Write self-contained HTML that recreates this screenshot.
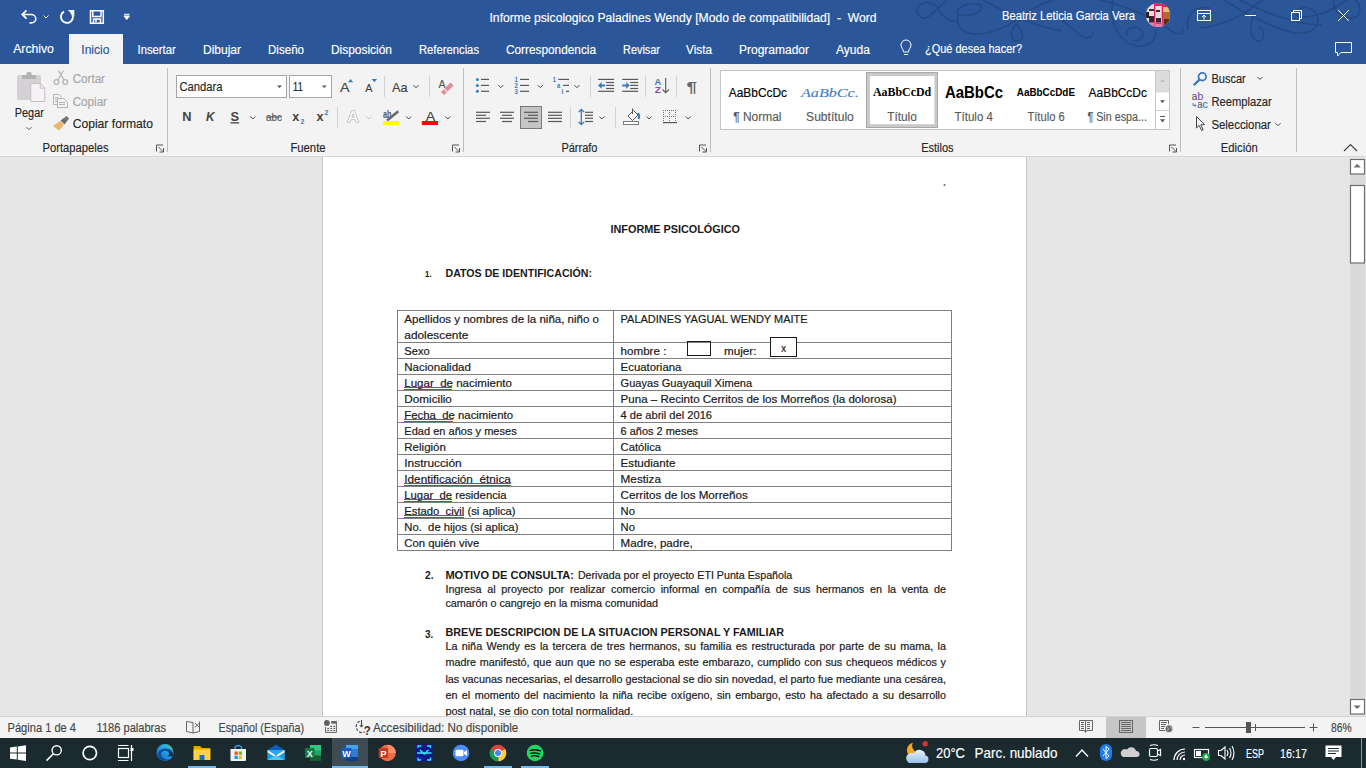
<!DOCTYPE html>
<html><head><meta charset="utf-8"><title>Word</title>
<style>html,body{margin:0;padding:0;width:1366px;height:768px;overflow:hidden;background:#e6e6e6}
svg text{font-family:"Liberation Sans", sans-serif;white-space:pre}
.dk{stroke:currentColor;stroke-width:0.35px}
</style></head><body>
<svg width="1366" height="768" viewBox="0 0 1366 768" style="position:absolute;left:0;top:0">
<rect x="0" y="0" width="1366" height="64" fill="#2b579a" />
<g fill="none" stroke="#244a85" stroke-width="1.6">
<path d="M947 0 C 940 6, 935 12, 928 17 C 920 21, 914 12, 919 6 C 924 0, 935 2, 939 10 C 943 17, 950 22, 958 22"/>
<path d="M958 14 C 955 25, 962 34, 975 34 C 995 34, 1010 25, 1025 14 C 1035 7, 1045 2, 1055 0"/>
<path d="M983 0 C 1000 10, 1030 25, 1062 31"/>
<path d="M1020 20 C 1010 28, 1009 41, 1017 41 C 1025 41, 1024 30, 1015 24"/>
<path d="M1050 10 C 1060 20, 1075 30, 1080 35 C 1085 40, 1095 38, 1093 31"/>
<path d="M1113 0 C 1110 15, 1113 35, 1130 44 C 1145 50, 1158 42, 1155 30"/>
<path d="M1127 35 C 1125 28, 1135 25, 1141 30 C 1146 35, 1140 42, 1133 40"/>
<path d="M1100 0 C 1120 5, 1150 15, 1170 30 C 1178 36, 1185 35, 1182 28"/>
<path d="M1188 30 C 1185 15, 1195 5, 1210 8"/>
<path d="M1224 0 C 1240 10, 1265 25, 1290 32 C 1305 36, 1318 30, 1318 20 C 1318 10, 1305 4, 1298 10 C 1292 16, 1300 20, 1320 14 C 1335 10, 1345 0, 1350 -2"/>
<path d="M1200 28 C 1225 25, 1245 15, 1262 0"/>
<path d="M1255 12 C 1248 25, 1250 40, 1258 41 C 1265 42, 1266 30, 1258 26"/>
<path d="M1334 0 C 1332 10, 1340 18, 1352 18 C 1362 17, 1362 5, 1355 0"/>
<path d="M1240 0 C 1270 15, 1300 25, 1322 25"/>
<ellipse cx="969.5" cy="9.5" rx="12.5" ry="5.5" transform="rotate(-12 969.5 9.5)"/>
</g>
<g fill="none" stroke="#fff" stroke-width="1.6" stroke-linecap="butt">
<path d="M23 14.5 H31 A4.8 4.2 0 0 1 31 22.9 H29.5"/>
</g>
<path d="M26.5 10.3 L22.3 14.5 L26.5 18.7" fill="none" stroke="#fff" stroke-width="1.8"/>
<path d="M43.5 15.5 L46 18 L48.5 15.5" fill="none" stroke="#fff" stroke-width="1"/>
<path d="M71.2 12.6 A6 6 0 1 1 64 11.6" fill="none" stroke="#fff" stroke-width="1.9"/>
<path d="M67.8 10 H74.3 V16.5 Z" fill="#fff"/>
<path d="M90.5 10.8 H103.3 V23.2 H90.5 Z M92.8 11 V16.5 H101 V11 M93.5 23 V19 H100.5 V23 M96 19.5 V22" fill="none" stroke="#fff" stroke-width="1.5"/>
<path d="M124 14.3 H129.5 M124 16 H129.5 L126.75 19.5 Z" fill="#fff" stroke="#fff" stroke-width="1"/>
<text x="489.5" y="22" font-size="12" fill="#fff" stroke="#fff" stroke-width="0.15" textLength="387" lengthAdjust="spacingAndGlyphs" >Informe psicologico Paladines Wendy [Modo de compatibilidad]  -  Word</text>
<text x="1002" y="20" font-size="12" fill="#fff" stroke="#fff" stroke-width="0.15" textLength="133" lengthAdjust="spacingAndGlyphs" >Beatriz Leticia Garcia Vera</text>
<defs><clipPath id="av"><circle cx="1158" cy="15" r="12.1"/></clipPath></defs>
<g clip-path="url(#av)">
<rect x="1145" y="2" width="26" height="26" fill="#eadcd6"/>
<rect x="1146" y="12" width="3" height="6" fill="#2a2222"/><rect x="1149" y="9" width="5" height="2" fill="#3a3030"/>
<rect x="1149" y="16" width="5" height="7" fill="#2e2a2e"/>
<rect x="1156" y="10" width="4" height="2" fill="#3a3030"/><rect x="1156" y="18" width="5" height="6" fill="#2e2a2e"/>
<rect x="1154" y="2" width="1.3" height="26" fill="#e0206a"/><rect x="1161.7" y="2" width="1.3" height="26" fill="#e0206a"/>
<rect x="1154" y="2" width="9" height="4" fill="#e0206a"/><rect x="1146" y="22" width="17" height="6" fill="#e85a9a" opacity="0.7"/>
<rect x="1163" y="2" width="9" height="26" fill="#b06a2a"/><rect x="1163" y="7" width="9" height="5" fill="#e5c07a"/><rect x="1163" y="3" width="5" height="4" fill="#e02030"/><rect x="1164" y="19" width="8" height="9" fill="#5a2a12"/>
</g>
<g fill="none" stroke="#fff" stroke-width="1">
<rect x="1197.5" y="10.5" width="13" height="10"/><path d="M1197.5 13.5 H1210.5 M1204 19.5 V15 M1202 17 L1204 15 L1206 17"/>
<path d="M1245 15.5 H1256"/>
<rect x="1291.5" y="12.5" width="8" height="8"/><path d="M1293.5 12.5 V10.5 H1301.5 V18.5 H1299.5"/>
<path d="M1338 10 L1349 21 M1349 10 L1338 21"/>
</g>
<rect x="69" y="34" width="54" height="30" fill="#f3f3f3" />
<text x="13.2" y="53" font-size="12" fill="#fff" stroke="#fff" stroke-width="0.15" textLength="40.7" lengthAdjust="spacingAndGlyphs" >Archivo</text>
<text x="81.3" y="54" font-size="12" fill="#2b579a" stroke="#2b579a" stroke-width="0.15" textLength="28.2" lengthAdjust="spacingAndGlyphs" >Inicio</text>
<text x="137.6" y="54" font-size="12" fill="#fff" stroke="#fff" stroke-width="0.15" textLength="38.1" lengthAdjust="spacingAndGlyphs" >Insertar</text>
<text x="203" y="54" font-size="12" fill="#fff" stroke="#fff" stroke-width="0.15" textLength="38" lengthAdjust="spacingAndGlyphs" >Dibujar</text>
<text x="268" y="54" font-size="12" fill="#fff" stroke="#fff" stroke-width="0.15" textLength="36" lengthAdjust="spacingAndGlyphs" >Diseño</text>
<text x="331" y="54" font-size="12" fill="#fff" stroke="#fff" stroke-width="0.15" textLength="61" lengthAdjust="spacingAndGlyphs" >Disposición</text>
<text x="419" y="54" font-size="12" fill="#fff" stroke="#fff" stroke-width="0.15" textLength="60" lengthAdjust="spacingAndGlyphs" >Referencias</text>
<text x="506" y="54" font-size="12" fill="#fff" stroke="#fff" stroke-width="0.15" textLength="90" lengthAdjust="spacingAndGlyphs" >Correspondencia</text>
<text x="623" y="54" font-size="12" fill="#fff" stroke="#fff" stroke-width="0.15" textLength="37" lengthAdjust="spacingAndGlyphs" >Revisar</text>
<text x="686" y="54" font-size="12" fill="#fff" stroke="#fff" stroke-width="0.15" textLength="26" lengthAdjust="spacingAndGlyphs" >Vista</text>
<text x="739" y="54" font-size="12" fill="#fff" stroke="#fff" stroke-width="0.15" textLength="70" lengthAdjust="spacingAndGlyphs" >Programador</text>
<text x="836" y="54" font-size="12" fill="#fff" stroke="#fff" stroke-width="0.15" textLength="34" lengthAdjust="spacingAndGlyphs" >Ayuda</text>
<text x="925" y="53" font-size="12" fill="#fff" stroke="#fff" stroke-width="0.15" textLength="97" lengthAdjust="spacingAndGlyphs" >¿Qué desea hacer?</text>
<path d="M903.5 52 C 903.5 49, 901 48, 901 45 A5 5 0 0 1 911 45 C 911 48, 908.5 49, 908.5 52 Z M904 54.5 H908" fill="none" stroke="#fff" stroke-width="1"/>
<path d="M1335.5 42.5 H1351.5 V52.5 H1341 L1337.5 56 V52.5 H1335.5 Z" fill="none" stroke="#fff" stroke-width="1"/>
<rect x="0" y="64" width="1366" height="92" fill="#f3f3f3" />
<rect x="0" y="156" width="1366" height="1" fill="#d6d6d6" />
<rect x="167" y="68" width="1" height="84" fill="#bdbdbd" />
<rect x="463" y="68" width="1" height="84" fill="#bdbdbd" />
<rect x="710" y="68" width="1" height="84" fill="#bdbdbd" />
<rect x="1180" y="68" width="1" height="84" fill="#bdbdbd" />
<rect x="1296" y="68" width="1" height="84" fill="#bdbdbd" />
<rect x="384" y="76" width="1" height="21" fill="#d2d2d2" />
<rect x="429" y="76" width="1" height="21" fill="#d2d2d2" />
<rect x="590" y="76" width="1" height="21" fill="#d2d2d2" />
<rect x="645" y="76" width="1" height="21" fill="#d2d2d2" />
<rect x="676" y="76" width="1" height="21" fill="#d2d2d2" />
<rect x="337" y="107" width="1" height="21" fill="#d2d2d2" />
<rect x="570" y="107" width="1" height="21" fill="#d2d2d2" />
<rect x="615" y="107" width="1" height="21" fill="#d2d2d2" />
<text x="42.5" y="152" font-size="12" fill="#262626" stroke="#262626" stroke-width="0.15" textLength="66" lengthAdjust="spacingAndGlyphs" >Portapapeles</text>
<text x="290.4" y="152" font-size="12" fill="#262626" stroke="#262626" stroke-width="0.15" textLength="35.2" lengthAdjust="spacingAndGlyphs" >Fuente</text>
<text x="561.4" y="152" font-size="12" fill="#262626" stroke="#262626" stroke-width="0.15" textLength="36" lengthAdjust="spacingAndGlyphs" >Párrafo</text>
<text x="921.2" y="152" font-size="12" fill="#262626" stroke="#262626" stroke-width="0.15" textLength="32.4" lengthAdjust="spacingAndGlyphs" >Estilos</text>
<text x="1220.7" y="152" font-size="12" fill="#262626" stroke="#262626" stroke-width="0.15" textLength="37" lengthAdjust="spacingAndGlyphs" >Edición</text>
<path d="M156.5 151.5 V145.0 H163" fill="none" stroke="#555" stroke-width="1"/>
<path d="M158.5 147.0 L163 151.5 M159.5 152.0 H163.5 V148.0" fill="none" stroke="#555" stroke-width="1"/>
<path d="M452.5 151.5 V145.0 H459" fill="none" stroke="#555" stroke-width="1"/>
<path d="M454.5 147.0 L459 151.5 M455.5 152.0 H459.5 V148.0" fill="none" stroke="#555" stroke-width="1"/>
<path d="M699.5 151.5 V145.0 H706" fill="none" stroke="#555" stroke-width="1"/>
<path d="M701.5 147.0 L706 151.5 M702.5 152.0 H706.5 V148.0" fill="none" stroke="#555" stroke-width="1"/>
<path d="M1169.5 151.5 V145.0 H1176" fill="none" stroke="#555" stroke-width="1"/>
<path d="M1171.5 147.0 L1176 151.5 M1172.5 152.0 H1176.5 V148.0" fill="none" stroke="#555" stroke-width="1"/>
<path d="M1344 151 L1350.5 144.5 L1357 151" fill="none" stroke="#444" stroke-width="1.2"/>
<rect x="17" y="75" width="24" height="25" rx="1.5" fill="#d3d1d3"/>
<rect x="22" y="75" width="14" height="4" fill="#b5b3b5"/><rect x="26.5" y="72" width="5" height="4" rx="1.5" fill="#b5b3b5"/>
<path d="M30.8 83.5 H40.5 L44.8 88 V101.5 H30.8 Z" fill="#f6f2f6" stroke="#c3c1c3" stroke-width="1"/>
<path d="M40.3 83.5 V88.2 H44.8" fill="none" stroke="#c3c1c3" stroke-width="1"/>
<text x="14.8" y="117" font-size="12" fill="#262626" stroke="#262626" stroke-width="0.15" textLength="29" lengthAdjust="spacingAndGlyphs" >Pegar</text>
<path d="M26.5 127.2 L29.0 129.7 L31.5 127.2" fill="none" stroke="#555" stroke-width="1"/>
<g fill="none" stroke="#b5b5b5" stroke-width="1.3"><circle cx="56.5" cy="82" r="2.4"/><circle cx="65.3" cy="82" r="2.4"/><path d="M57.8 79.8 L63.5 70.5 M64 79.8 L58.3 70.5"/></g>
<text x="72.7" y="83" font-size="12" fill="#a6a6a6" stroke="#a6a6a6" stroke-width="0.15" textLength="32.3" lengthAdjust="spacingAndGlyphs" >Cortar</text>
<g fill="#f3f3f3" stroke="#b5b5b5" stroke-width="1"><path d="M53.5 94.5 H59 L61 96.5 V104.5 H53.5 Z"/><path d="M57.5 98.5 H63.5 L67.5 102.5 V107.5 H57.5 Z"/><path d="M55 97.5 H58 M55 99.5 H58 M55 101.5 H57 M59 102.5 H65 M59 104.5 H65"/></g>
<text x="72.7" y="106" font-size="12" fill="#a6a6a6" stroke="#a6a6a6" stroke-width="0.15" textLength="34.3" lengthAdjust="spacingAndGlyphs" >Copiar</text>
<path d="M53 126 L60 121 L64 125 L59 130.5 Z" fill="#e8b86a"/>
<path d="M60.5 120.5 L64.5 117.5 L67.5 120.5 L64.5 124.5 Z" fill="#6d6d6d"/><path d="M64.5 117.5 L66.5 116 L69 118.5 L67.5 120.5 Z" fill="#6d6d6d"/>
<text x="72.7" y="128.2" font-size="12" fill="#262626" stroke="#262626" stroke-width="0.15" textLength="80.2" lengthAdjust="spacingAndGlyphs" >Copiar formato</text>
<rect x="176.5" y="75.5" width="110" height="22" fill="#fff" stroke="#a6a6a6" stroke-width="1"/>
<rect x="289.5" y="75.5" width="42" height="22" fill="#fff" stroke="#a6a6a6" stroke-width="1"/>
<text x="179.5" y="90.8" font-size="12" fill="#262626" stroke="#262626" stroke-width="0.15" textLength="43" lengthAdjust="spacingAndGlyphs" >Candara</text>
<text x="292.8" y="90.8" font-size="12" fill="#262626" stroke="#262626" stroke-width="0.15" textLength="10.2" lengthAdjust="spacingAndGlyphs" >11</text>
<path d="M277 85.5 H282 L279.5 88 Z M321.8 85.5 H326.8 L324.3 88 Z" fill="#555"/>
<text x="340" y="92" font-size="13.5" fill="#444" stroke="#444" stroke-width="0.15" textLength="9.5" lengthAdjust="spacingAndGlyphs" >A</text>
<path d="M348 82.2 L350.6 79 L353.2 82.2 Z" fill="#3d78b8"/>
<text x="365.2" y="92" font-size="10.5" fill="#444" stroke="#444" stroke-width="0.15" textLength="7.2" lengthAdjust="spacingAndGlyphs" >A</text>
<path d="M371.7 79 L377.1 79 L374.4 82.2 Z" fill="#3d78b8"/>
<text x="392" y="92" font-size="13.5" fill="#444" stroke="#444" stroke-width="0.15" textLength="15.5" lengthAdjust="spacingAndGlyphs" >Aa</text>
<path d="M413.5 85.2 L416.0 87.7 L418.5 85.2" fill="none" stroke="#444" stroke-width="1"/>
<text x="438.5" y="87.5" font-size="10" fill="#555" stroke="#555" stroke-width="0.15" textLength="7" lengthAdjust="spacingAndGlyphs" >A</text>
<path d="M444.5 88.5 L450.5 82.5 L453.5 85.5 L447.5 91.5 Z" fill="#e48a9a"/><path d="M441 92 L443.8 89.2 L446.8 92.2 L444 95 Z" fill="#e48a9a"/>
<text x="182.3" y="120.8" font-size="12.5" fill="#444" font-weight="bold" textLength="9.2" lengthAdjust="spacingAndGlyphs" >N</text>
<text x="206" y="120.8" font-size="12.5" fill="#444" font-weight="bold" font-style="italic" textLength="8.5" lengthAdjust="spacingAndGlyphs" >K</text>
<text x="230.5" y="120.8" font-size="12.5" fill="#444" font-weight="bold" textLength="8.6" lengthAdjust="spacingAndGlyphs" >S</text>
<rect x="230.5" y="122.2" width="8.6" height="1.3" fill="#444" />
<path d="M250.3 116.5 L252.8 119.0 L255.3 116.5" fill="none" stroke="#444" stroke-width="1"/>
<text x="266" y="120.8" font-size="11.5" fill="#555" stroke="#555" stroke-width="0.15" textLength="16" lengthAdjust="spacingAndGlyphs" >abc</text>
<rect x="266" y="116.5" width="16" height="1" fill="#555" />
<text x="292.2" y="120.8" font-size="12.5" fill="#444" font-weight="bold" textLength="7" lengthAdjust="spacingAndGlyphs" >x</text>
<text x="300.6" y="124" font-size="7" fill="#3d78b8" font-weight="bold" textLength="3.8" lengthAdjust="spacingAndGlyphs" >2</text>
<text x="316.5" y="120.8" font-size="12.5" fill="#444" font-weight="bold" textLength="7" lengthAdjust="spacingAndGlyphs" >x</text>
<text x="324.6" y="115" font-size="7" fill="#3d78b8" font-weight="bold" textLength="3.8" lengthAdjust="spacingAndGlyphs" >2</text>
<path d="M347.2 122.5 L351.6 110.6 H354.4 L358.8 122.5 H356 L355 119.6 H351 L350 122.5 Z M351.8 117.4 H354.2 L353 113.6 Z" fill="#fbfbfb" stroke="#c2c2c2" stroke-width="0.9" fill-rule="evenodd"/>
<path d="M366.4 116.5 L368.9 119.0 L371.4 116.5" fill="none" stroke="#c4c4c4" stroke-width="1"/>
<text x="383" y="117.5" font-size="10" fill="#555" font-weight="bold" textLength="8.5" lengthAdjust="spacingAndGlyphs" >ab</text>
<path d="M387 120.5 L398.3 111.3" stroke="#6a6a6a" stroke-width="2.6"/>
<rect x="383" y="121" width="16" height="4" fill="#ffff00" />
<path d="M406.2 116.5 L408.7 119.0 L411.2 116.5" fill="none" stroke="#444" stroke-width="1"/>
<text x="425.8" y="120.8" font-size="13" fill="#444" stroke="#444" stroke-width="0.15" textLength="9.5" lengthAdjust="spacingAndGlyphs" >A</text>
<rect x="421.8" y="121" width="16.2" height="4" fill="#ff0000" />
<path d="M445.3 116.5 L447.8 119.0 L450.3 116.5" fill="none" stroke="#444" stroke-width="1"/>
<circle cx="477.4" cy="79.4" r="1.5" fill="#3d78b8"/>
<rect x="481" y="78.80000000000001" width="8" height="1.2" fill="#595959" />
<circle cx="477.4" cy="85.4" r="1.5" fill="#3d78b8"/>
<rect x="481" y="84.80000000000001" width="8" height="1.2" fill="#595959" />
<circle cx="477.4" cy="91.3" r="1.5" fill="#3d78b8"/>
<rect x="481" y="90.7" width="8" height="1.2" fill="#595959" />
<path d="M498.3 85.2 L500.8 87.7 L503.3 85.2" fill="none" stroke="#444" stroke-width="1"/>
<text x="514.6" y="82.0" font-size="7" fill="#3d78b8" font-weight="bold" textLength="3.4" lengthAdjust="spacingAndGlyphs" >1</text>
<rect x="520" y="78.80000000000001" width="9" height="1.2" fill="#595959" />
<text x="514.6" y="88.0" font-size="7" fill="#3d78b8" font-weight="bold" textLength="3.4" lengthAdjust="spacingAndGlyphs" >2</text>
<rect x="520" y="84.80000000000001" width="9" height="1.2" fill="#595959" />
<text x="514.6" y="93.89999999999999" font-size="7" fill="#3d78b8" font-weight="bold" textLength="3.4" lengthAdjust="spacingAndGlyphs" >3</text>
<rect x="520" y="90.7" width="9" height="1.2" fill="#595959" />
<path d="M537.8 85.2 L540.3 87.7 L542.8 85.2" fill="none" stroke="#444" stroke-width="1"/>
<text x="552.8" y="82" font-size="7" fill="#3d78b8" font-weight="bold" textLength="3.2" lengthAdjust="spacingAndGlyphs" >1</text>
<rect x="558.3" y="78.8" width="10.7" height="1.2" fill="#595959" />
<text x="557" y="88" font-size="7" fill="#3d78b8" font-weight="bold" textLength="3.2" lengthAdjust="spacingAndGlyphs" >a</text>
<rect x="563" y="84.8" width="6" height="1.2" fill="#595959" />
<text x="561.6" y="94" font-size="7" fill="#3d78b8" font-weight="bold" textLength="1.8" lengthAdjust="spacingAndGlyphs" >i</text>
<rect x="566" y="90.7" width="3" height="1.2" fill="#595959" />
<path d="M574.5 85.2 L577.0 87.7 L579.5 85.2" fill="none" stroke="#444" stroke-width="1"/>
<rect x="598.1" y="78.8" width="16" height="1.2" fill="#595959" />
<rect x="598.1" y="90.7" width="16" height="1.2" fill="#595959" />
<rect x="606.1" y="81.9" width="8" height="1.2" fill="#595959" />
<rect x="606.1" y="84.8" width="8" height="1.2" fill="#595959" />
<rect x="606.1" y="87.9" width="8" height="1.2" fill="#595959" />
<path d="M598.1 85.4 L601.6 82 V84.4 H605.1 V86.4 H601.6 V88.8 Z" fill="#3d78b8"/>
<rect x="622.2" y="78.8" width="16" height="1.2" fill="#595959" />
<rect x="622.2" y="90.7" width="16" height="1.2" fill="#595959" />
<rect x="630.2" y="81.9" width="8" height="1.2" fill="#595959" />
<rect x="630.2" y="84.8" width="8" height="1.2" fill="#595959" />
<rect x="630.2" y="87.9" width="8" height="1.2" fill="#595959" />
<path d="M629.7 85.4 L626.2 82 V84.4 H622.2 V86.4 H626.2 V88.8 Z" fill="#3d78b8"/>
<text x="654.6" y="84.6" font-size="9" fill="#3d78b8" font-weight="bold" textLength="6.6" lengthAdjust="spacingAndGlyphs" >A</text>
<text x="654.8" y="93.2" font-size="9" fill="#8a4bb4" font-weight="bold" textLength="6.2" lengthAdjust="spacingAndGlyphs" >Z</text>
<path d="M665.7 78 V92.5 M662.5 89.5 L665.7 92.8 L668.9 89.5" fill="none" stroke="#555" stroke-width="1.1"/>
<text x="686.5" y="92" font-size="14" fill="#666" font-weight="bold" textLength="10.5" lengthAdjust="spacingAndGlyphs" >¶</text>
<rect x="476" y="111.7" width="14" height="1.2" fill="#595959" />
<rect x="476" y="114.7" width="10" height="1.2" fill="#595959" />
<rect x="476" y="117.7" width="14" height="1.2" fill="#595959" />
<rect x="476" y="120.9" width="10" height="1.2" fill="#595959" />
<rect x="500" y="111.7" width="14" height="1.2" fill="#595959" />
<rect x="502" y="114.7" width="10" height="1.2" fill="#595959" />
<rect x="500" y="117.7" width="14" height="1.2" fill="#595959" />
<rect x="502" y="120.9" width="10" height="1.2" fill="#595959" />
<rect x="520.5" y="106.5" width="21" height="22" fill="#c5c5c5" stroke="#7a7a7a" stroke-width="1"/>
<rect x="524" y="111.7" width="14" height="1.2" fill="#595959" />
<rect x="528" y="114.7" width="10" height="1.2" fill="#595959" />
<rect x="524" y="117.7" width="14" height="1.2" fill="#595959" />
<rect x="528" y="120.9" width="10" height="1.2" fill="#595959" />
<rect x="548" y="111.7" width="14" height="1.2" fill="#595959" />
<rect x="548" y="114.7" width="14" height="1.2" fill="#595959" />
<rect x="548" y="117.7" width="14" height="1.2" fill="#595959" />
<rect x="548" y="120.9" width="14" height="1.2" fill="#595959" />
<path d="M581.3 109.5 V124.5 M578.6 112 L581.3 109.3 L584 112 M578.6 122 L581.3 124.7 L584 122" fill="none" stroke="#3d78b8" stroke-width="1.3"/>
<rect x="585" y="111.7" width="8" height="1.2" fill="#595959" />
<rect x="585" y="114.7" width="8" height="1.2" fill="#595959" />
<rect x="585" y="117.7" width="8" height="1.2" fill="#595959" />
<rect x="585" y="120.9" width="8" height="1.2" fill="#595959" />
<path d="M599.3 116.5 L601.8 119.0 L604.3 116.5" fill="none" stroke="#444" stroke-width="1"/>
<path d="M628 116 L633.5 110.5 L638 115 L632.5 120.5 Z" fill="#fff" stroke="#555" stroke-width="1"/><path d="M632.5 108.5 V114" stroke="#555" stroke-width="1"/>
<path d="M638 113 Q640 116 638.5 119" fill="none" stroke="#3d78b8" stroke-width="2"/>
<rect x="623.5" y="121.5" width="15" height="3" fill="#fff" stroke="#7a7a7a" stroke-width="1"/>
<path d="M646.6 116.5 L649.1 119.0 L651.6 116.5" fill="none" stroke="#444" stroke-width="1"/>
<g fill="#777">
<rect x="663" y="110" width="1" height="1"/>
<rect x="663" y="112" width="1" height="1"/>
<rect x="663" y="114" width="1" height="1"/>
<rect x="663" y="116" width="1" height="1"/>
<rect x="663" y="118" width="1" height="1"/>
<rect x="663" y="120" width="1" height="1"/>
<rect x="663" y="122" width="1" height="1"/>
<rect x="665" y="110" width="1" height="1"/>
<rect x="665" y="116" width="1" height="1"/>
<rect x="665" y="122" width="1" height="1"/>
<rect x="667" y="110" width="1" height="1"/>
<rect x="667" y="116" width="1" height="1"/>
<rect x="667" y="122" width="1" height="1"/>
<rect x="669" y="110" width="1" height="1"/>
<rect x="669" y="112" width="1" height="1"/>
<rect x="669" y="114" width="1" height="1"/>
<rect x="669" y="116" width="1" height="1"/>
<rect x="669" y="118" width="1" height="1"/>
<rect x="669" y="120" width="1" height="1"/>
<rect x="669" y="122" width="1" height="1"/>
<rect x="671" y="110" width="1" height="1"/>
<rect x="671" y="116" width="1" height="1"/>
<rect x="671" y="122" width="1" height="1"/>
<rect x="673" y="110" width="1" height="1"/>
<rect x="673" y="116" width="1" height="1"/>
<rect x="673" y="122" width="1" height="1"/>
<rect x="675" y="110" width="1" height="1"/>
<rect x="675" y="112" width="1" height="1"/>
<rect x="675" y="114" width="1" height="1"/>
<rect x="675" y="116" width="1" height="1"/>
<rect x="675" y="118" width="1" height="1"/>
<rect x="675" y="120" width="1" height="1"/>
<rect x="675" y="122" width="1" height="1"/>
</g>
<rect x="663" y="122" width="14" height="1.2" fill="#555" />
<path d="M685.7 116.5 L688.2 119.0 L690.7 116.5" fill="none" stroke="#444" stroke-width="1"/>
<rect x="720.5" y="70.5" width="449" height="59" fill="#fff" stroke="#c6c6c6" stroke-width="1"/>
<text x="728.8" y="97" font-size="12" fill="#000" stroke="#000" stroke-width="0.15" textLength="58.2" lengthAdjust="spacingAndGlyphs" >AaBbCcDc</text>
<text x="733.2" y="120.5" font-size="12" fill="#595959" stroke="#595959" stroke-width="0.15" textLength="48.3" lengthAdjust="spacingAndGlyphs" >¶ Normal</text>
<text x="801" y="97" font-size="13" fill="#4a7fc1" stroke="#4a7fc1" stroke-width="0.15" style='font-family:"Liberation Serif", serif' font-style="italic" textLength="57.8" lengthAdjust="spacingAndGlyphs" >AaBbCc.</text>
<text x="806.1" y="120.5" font-size="12" fill="#595959" stroke="#595959" stroke-width="0.15" textLength="47.7" lengthAdjust="spacingAndGlyphs" >Subtítulo</text>
<rect x="866.5" y="72.5" width="71" height="55" fill="#c9c9c9" stroke="#a8a8a8" stroke-width="1"/>
<rect x="870" y="76" width="64.4" height="48.2" fill="#fff" />
<text x="872.9" y="95.9" font-size="12" fill="#000" style='font-family:"Liberation Serif", serif' font-weight="bold" textLength="58.3" lengthAdjust="spacingAndGlyphs" >AaBbCcDd</text>
<text x="887.2" y="120.5" font-size="12" fill="#595959" stroke="#595959" stroke-width="0.15" textLength="29.6" lengthAdjust="spacingAndGlyphs" >Título</text>
<text x="944.9" y="97.6" font-size="16.5" fill="#000" font-weight="bold" textLength="58.2" lengthAdjust="spacingAndGlyphs" >AaBbCc</text>
<text x="954.6" y="120.5" font-size="12" fill="#595959" stroke="#595959" stroke-width="0.15" textLength="38.3" lengthAdjust="spacingAndGlyphs" >Título 4</text>
<text x="1016.8" y="95.9" font-size="10.5" fill="#000" font-weight="bold" textLength="58.2" lengthAdjust="spacingAndGlyphs" >AaBbCcDdE</text>
<text x="1027.4" y="120.5" font-size="12" fill="#595959" stroke="#595959" stroke-width="0.15" textLength="37.3" lengthAdjust="spacingAndGlyphs" >Título 6</text>
<text x="1088.6" y="96.5" font-size="12" fill="#000" stroke="#000" stroke-width="0.15" textLength="58.3" lengthAdjust="spacingAndGlyphs" >AaBbCcDc</text>
<text x="1087.4" y="120.5" font-size="12" fill="#595959" stroke="#595959" stroke-width="0.15" textLength="59.6" lengthAdjust="spacingAndGlyphs" >¶ Sin espa...</text>
<rect x="1155.5" y="70.5" width="14" height="59" fill="#fff" stroke="#c6c6c6" stroke-width="1"/>
<rect x="1156" y="71" width="13" height="20.5" fill="#dcdcdc" />
<rect x="1155.5" y="91.5" width="14" height="0.8" fill="#c6c6c6" />
<rect x="1155.5" y="110" width="14" height="0.8" fill="#c6c6c6" />
<path d="M1160 82 L1162.5 79 L1165 82 Z" fill="#bdbdbd"/>
<path d="M1160 100.2 H1165 L1162.5 103 Z" fill="#555"/>
<rect x="1160" y="116" width="5" height="1" fill="#555" />
<path d="M1160 119.2 H1165 L1162.5 122.5 Z" fill="#555"/>
<circle cx="1202.3" cy="76.7" r="3.8" fill="none" stroke="#3d78b8" stroke-width="1.8"/><path d="M1199.5 79.6 L1194.3 84.6" stroke="#3d78b8" stroke-width="2.2" stroke-linecap="round"/>
<text x="1211.4" y="82.8" font-size="12" fill="#262626" stroke="#262626" stroke-width="0.15" textLength="34.4" lengthAdjust="spacingAndGlyphs" >Buscar</text>
<path d="M1257.4 77 L1259.9 79.5 L1262.4 77" fill="none" stroke="#444" stroke-width="1"/>
<text x="1191.8" y="100.2" font-size="10" fill="#595959" stroke="#595959" stroke-width="0.15" textLength="5.5" lengthAdjust="spacingAndGlyphs" >a</text>
<text x="1197.5" y="100.2" font-size="10" fill="#8a4bb4" stroke="#8a4bb4" stroke-width="0.15" textLength="5.8" lengthAdjust="spacingAndGlyphs" >b</text>
<text x="1197.2" y="107.7" font-size="10" fill="#595959" stroke="#595959" stroke-width="0.15" textLength="5.3" lengthAdjust="spacingAndGlyphs" >a</text>
<text x="1202.5" y="107.7" font-size="10" fill="#3d78b8" stroke="#3d78b8" stroke-width="0.15" textLength="5.3" lengthAdjust="spacingAndGlyphs" >c</text>
<path d="M1193 103 V105.5 H1196 M1194.7 104.2 L1196 105.5 L1194.7 106.8" fill="none" stroke="#3d78b8" stroke-width="0.9"/>
<text x="1211.4" y="105.6" font-size="12" fill="#262626" stroke="#262626" stroke-width="0.15" textLength="60.4" lengthAdjust="spacingAndGlyphs" >Reemplazar</text>
<path d="M1196.5 116.5 V128 L1199.2 125.5 L1201.6 130.5 L1203.2 129.8 L1200.8 124.8 L1204.5 124.6 Z" fill="#f3f3f3" stroke="#444" stroke-width="1"/>
<text x="1211.4" y="128.7" font-size="12" fill="#262626" stroke="#262626" stroke-width="0.15" textLength="59.5" lengthAdjust="spacingAndGlyphs" >Seleccionar</text>
<path d="M1275.5 123.2 L1278.0 125.7 L1280.5 123.2" fill="none" stroke="#444" stroke-width="1"/>
<rect x="0" y="157" width="1349" height="559" fill="#e6e6e6" />
<rect x="322" y="157" width="705" height="559" fill="#c6c6c6" />
<rect x="323" y="157" width="703" height="559" fill="#ffffff" />
<rect x="1349" y="157" width="17" height="559" fill="#e6e6e6" />
<rect x="1350" y="174" width="15" height="525" fill="#dadada" />
<rect x="1350.5" y="159.5" width="14" height="14.5" fill="#fff" stroke="#6f6f6f" stroke-width="1.2"/>
<path d="M1353.6 167.4 H1360.8 L1357.2 163.8 Z" fill="#6f6f6f"/>
<rect x="1350.5" y="185.5" width="14" height="77.5" fill="#fff" stroke="#6f6f6f" stroke-width="1.2"/>
<rect x="1350.5" y="699.5" width="14" height="14.5" fill="#fff" stroke="#6f6f6f" stroke-width="1.2"/>
<path d="M1353.6 705.4 H1360.8 L1357.2 709 Z" fill="#6f6f6f"/>
<circle cx="944.5" cy="185" r="1" fill="#666"/>
<text x="610.5" y="233.2" font-size="11.5" fill="#1a1a1a" font-weight="bold" textLength="129.5" lengthAdjust="spacingAndGlyphs" >INFORME PSICOLÓGICO</text>
<text x="425" y="277" font-size="9.5" fill="#1a1a1a" font-weight="bold" textLength="6.6" lengthAdjust="spacingAndGlyphs" >1.</text>
<text x="445.5" y="277.1" font-size="11.5" fill="#1a1a1a" font-weight="bold" textLength="146.5" lengthAdjust="spacingAndGlyphs" >DATOS DE IDENTIFICACIÓN:</text>
<rect x="397" y="310" width="555" height="1" fill="#7f7f7f" />
<rect x="397" y="342" width="555" height="1" fill="#7f7f7f" />
<rect x="397" y="358" width="555" height="1" fill="#7f7f7f" />
<rect x="397" y="374" width="555" height="1" fill="#7f7f7f" />
<rect x="397" y="390" width="555" height="1" fill="#7f7f7f" />
<rect x="397" y="406" width="555" height="1" fill="#7f7f7f" />
<rect x="397" y="422" width="555" height="1" fill="#7f7f7f" />
<rect x="397" y="438" width="555" height="1" fill="#7f7f7f" />
<rect x="397" y="454" width="555" height="1" fill="#7f7f7f" />
<rect x="397" y="470" width="555" height="1" fill="#7f7f7f" />
<rect x="397" y="486" width="555" height="1" fill="#7f7f7f" />
<rect x="397" y="502" width="555" height="1" fill="#7f7f7f" />
<rect x="397" y="518" width="555" height="1" fill="#7f7f7f" />
<rect x="397" y="534" width="555" height="1" fill="#7f7f7f" />
<rect x="397" y="550" width="555" height="1" fill="#7f7f7f" />
<rect x="397" y="310" width="1" height="241" fill="#7f7f7f" />
<rect x="613" y="310" width="1" height="241" fill="#7f7f7f" />
<rect x="951" y="310" width="1" height="241" fill="#7f7f7f" />
<text x="404.3" y="322.8" font-size="11.5" fill="#1a1a1a" stroke="#1a1a1a" stroke-width="0.2" textLength="194.7" lengthAdjust="spacingAndGlyphs" >Apellidos y nombres de la niña, niño o</text>
<text x="404.3" y="354.8" font-size="11.5" fill="#1a1a1a" stroke="#1a1a1a" stroke-width="0.2" textLength="25.5" lengthAdjust="spacingAndGlyphs" >Sexo</text>
<text x="404.3" y="370.8" font-size="11.5" fill="#1a1a1a" stroke="#1a1a1a" stroke-width="0.2" textLength="66.6" lengthAdjust="spacingAndGlyphs" >Nacionalidad</text>
<text x="404.3" y="386.8" font-size="11.5" fill="#1a1a1a" stroke="#1a1a1a" stroke-width="0.2" textLength="107.6" lengthAdjust="spacingAndGlyphs" >Lugar  de nacimiento</text>
<text x="404.3" y="402.8" font-size="11.5" fill="#1a1a1a" stroke="#1a1a1a" stroke-width="0.2" textLength="47.6" lengthAdjust="spacingAndGlyphs" >Domicilio</text>
<text x="404.3" y="418.8" font-size="11.5" fill="#1a1a1a" stroke="#1a1a1a" stroke-width="0.2" textLength="108.7" lengthAdjust="spacingAndGlyphs" >Fecha  de nacimiento</text>
<text x="404.3" y="434.8" font-size="11.5" fill="#1a1a1a" stroke="#1a1a1a" stroke-width="0.2" textLength="112.4" lengthAdjust="spacingAndGlyphs" >Edad en años y meses</text>
<text x="404.3" y="450.8" font-size="11.5" fill="#1a1a1a" stroke="#1a1a1a" stroke-width="0.2" textLength="41.6" lengthAdjust="spacingAndGlyphs" >Religión</text>
<text x="404.3" y="466.8" font-size="11.5" fill="#1a1a1a" stroke="#1a1a1a" stroke-width="0.2" textLength="57.4" lengthAdjust="spacingAndGlyphs" >Instrucción</text>
<text x="404.3" y="482.8" font-size="11.5" fill="#1a1a1a" stroke="#1a1a1a" stroke-width="0.2" textLength="106.5" lengthAdjust="spacingAndGlyphs" >Identificación  étnica</text>
<text x="404.3" y="498.8" font-size="11.5" fill="#1a1a1a" stroke="#1a1a1a" stroke-width="0.2" textLength="102.3" lengthAdjust="spacingAndGlyphs" >Lugar  de residencia</text>
<text x="404.3" y="514.8" font-size="11.5" fill="#1a1a1a" stroke="#1a1a1a" stroke-width="0.2" textLength="111.3" lengthAdjust="spacingAndGlyphs" >Estado  civil (si aplica)</text>
<text x="404.3" y="530.8" font-size="11.5" fill="#1a1a1a" stroke="#1a1a1a" stroke-width="0.2" textLength="114.1" lengthAdjust="spacingAndGlyphs" >No.  de hijos (si aplica)</text>
<text x="404.3" y="546.8" font-size="11.5" fill="#1a1a1a" stroke="#1a1a1a" stroke-width="0.2" textLength="74.9" lengthAdjust="spacingAndGlyphs" >Con quién vive</text>
<text x="620.6" y="322.8" font-size="11.5" fill="#1a1a1a" stroke="#1a1a1a" stroke-width="0.2" textLength="186.9" lengthAdjust="spacingAndGlyphs" >PALADINES YAGUAL WENDY MAITE</text>
<text x="620.6" y="354.8" font-size="11.5" fill="#1a1a1a" stroke="#1a1a1a" stroke-width="0.2" textLength="45.8" lengthAdjust="spacingAndGlyphs" >hombre :</text>
<text x="620.6" y="370.8" font-size="11.5" fill="#1a1a1a" stroke="#1a1a1a" stroke-width="0.2" textLength="60.8" lengthAdjust="spacingAndGlyphs" >Ecuatoriana</text>
<text x="620.6" y="386.8" font-size="11.5" fill="#1a1a1a" stroke="#1a1a1a" stroke-width="0.2" textLength="131.5" lengthAdjust="spacingAndGlyphs" >Guayas Guayaquil Ximena</text>
<text x="620.6" y="402.8" font-size="11.5" fill="#1a1a1a" stroke="#1a1a1a" stroke-width="0.2" textLength="276.0" lengthAdjust="spacingAndGlyphs" >Puna – Recinto Cerritos de los Morreños (la dolorosa)</text>
<text x="620.6" y="418.8" font-size="11.5" fill="#1a1a1a" stroke="#1a1a1a" stroke-width="0.2" textLength="91.4" lengthAdjust="spacingAndGlyphs" >4 de abril del 2016</text>
<text x="620.6" y="434.8" font-size="11.5" fill="#1a1a1a" stroke="#1a1a1a" stroke-width="0.2" textLength="77.4" lengthAdjust="spacingAndGlyphs" >6 años 2 meses</text>
<text x="620.6" y="450.8" font-size="11.5" fill="#1a1a1a" stroke="#1a1a1a" stroke-width="0.2" textLength="40.4" lengthAdjust="spacingAndGlyphs" >Católica</text>
<text x="620.6" y="466.8" font-size="11.5" fill="#1a1a1a" stroke="#1a1a1a" stroke-width="0.2" textLength="54.9" lengthAdjust="spacingAndGlyphs" >Estudiante</text>
<text x="620.6" y="482.8" font-size="11.5" fill="#1a1a1a" stroke="#1a1a1a" stroke-width="0.2" textLength="40.4" lengthAdjust="spacingAndGlyphs" >Mestiza</text>
<text x="620.6" y="498.8" font-size="11.5" fill="#1a1a1a" stroke="#1a1a1a" stroke-width="0.2" textLength="127.1" lengthAdjust="spacingAndGlyphs" >Cerritos de los Morreños</text>
<text x="620.6" y="514.8" font-size="11.5" fill="#1a1a1a" stroke="#1a1a1a" stroke-width="0.2" textLength="14.3" lengthAdjust="spacingAndGlyphs" >No</text>
<text x="620.6" y="530.8" font-size="11.5" fill="#1a1a1a" stroke="#1a1a1a" stroke-width="0.2" textLength="14.3" lengthAdjust="spacingAndGlyphs" >No</text>
<text x="620.6" y="546.8" font-size="11.5" fill="#1a1a1a" stroke="#1a1a1a" stroke-width="0.2" textLength="72.2" lengthAdjust="spacingAndGlyphs" >Madre, padre,</text>
<text x="404.3" y="338.8" font-size="11.5" fill="#1a1a1a" stroke="#1a1a1a" stroke-width="0.2" textLength="64" lengthAdjust="spacingAndGlyphs" >adolescente</text>
<text x="723.9" y="354.8" font-size="11.5" fill="#1a1a1a" stroke="#1a1a1a" stroke-width="0.2" textLength="32.5" lengthAdjust="spacingAndGlyphs" >mujer:</text>
<rect x="687.5" y="341.5" width="23" height="14" fill="none" stroke="#1a1a1a" stroke-width="1"/>
<rect x="770.5" y="337.5" width="26" height="19" fill="#fff" stroke="#1a1a1a" stroke-width="1"/>
<text x="781.2" y="352" font-size="10.5" fill="#1a1a1a" stroke="#1a1a1a" stroke-width="0.2" textLength="4.8" lengthAdjust="spacingAndGlyphs" >x</text>
<rect x="404" y="387" width="47.89999999999998" height="1" fill="#2266dd" />
<rect x="404" y="389" width="47.89999999999998" height="1" fill="#2266dd" />
<rect x="404" y="419" width="48.80000000000001" height="1" fill="#2266dd" />
<rect x="404" y="421" width="48.80000000000001" height="1" fill="#2266dd" />
<rect x="404" y="483" width="106.80000000000001" height="1" fill="#2266dd" />
<rect x="404" y="485" width="106.80000000000001" height="1" fill="#2266dd" />
<rect x="404" y="499" width="48" height="1" fill="#2266dd" />
<rect x="404" y="501" width="48" height="1" fill="#2266dd" />
<rect x="404" y="515" width="60" height="1" fill="#2266dd" />
<rect x="404" y="517" width="60" height="1" fill="#2266dd" />
<text x="425" y="579" font-size="10.5" fill="#1a1a1a" font-weight="bold" textLength="8.5" lengthAdjust="spacingAndGlyphs" >2.</text>
<text x="445.4" y="578.9" font-size="11.5" fill="#1a1a1a" font-weight="bold" textLength="128.6" lengthAdjust="spacingAndGlyphs" >MOTIVO DE CONSULTA:</text>
<text x="577.9" y="578.9" font-size="11.5" fill="#1a1a1a" stroke="#1a1a1a" stroke-width="0.2" textLength="214.4" lengthAdjust="spacingAndGlyphs" >Derivada por el proyecto ETI Punta Española</text>
<text x="445.4" y="592.8" font-size="11.5" fill="#1a1a1a" stroke="#1a1a1a" stroke-width="0.2" textLength="36.05" lengthAdjust="spacingAndGlyphs" >Ingresa</text>
<text x="487.19" y="592.8" font-size="11.5" fill="#1a1a1a" stroke="#1a1a1a" stroke-width="0.2" textLength="8.41" lengthAdjust="spacingAndGlyphs" >al</text>
<text x="501.33" y="592.8" font-size="11.5" fill="#1a1a1a" stroke="#1a1a1a" stroke-width="0.2" textLength="41.46" lengthAdjust="spacingAndGlyphs" >proyecto</text>
<text x="548.53" y="592.8" font-size="11.5" fill="#1a1a1a" stroke="#1a1a1a" stroke-width="0.2" textLength="15.62" lengthAdjust="spacingAndGlyphs" >por</text>
<text x="569.88" y="592.8" font-size="11.5" fill="#1a1a1a" stroke="#1a1a1a" stroke-width="0.2" textLength="35.44" lengthAdjust="spacingAndGlyphs" >realizar</text>
<text x="611.06" y="592.8" font-size="11.5" fill="#1a1a1a" stroke="#1a1a1a" stroke-width="0.2" textLength="43.85" lengthAdjust="spacingAndGlyphs" >comercio</text>
<text x="660.64" y="592.8" font-size="11.5" fill="#1a1a1a" stroke="#1a1a1a" stroke-width="0.2" textLength="38.44" lengthAdjust="spacingAndGlyphs" >informal</text>
<text x="704.82" y="592.8" font-size="11.5" fill="#1a1a1a" stroke="#1a1a1a" stroke-width="0.2" textLength="12.02" lengthAdjust="spacingAndGlyphs" >en</text>
<text x="722.58" y="592.8" font-size="11.5" fill="#1a1a1a" stroke="#1a1a1a" stroke-width="0.2" textLength="47.47" lengthAdjust="spacingAndGlyphs" >compañía</text>
<text x="775.78" y="592.8" font-size="11.5" fill="#1a1a1a" stroke="#1a1a1a" stroke-width="0.2" textLength="12.02" lengthAdjust="spacingAndGlyphs" >de</text>
<text x="793.54" y="592.8" font-size="11.5" fill="#1a1a1a" stroke="#1a1a1a" stroke-width="0.2" textLength="16.82" lengthAdjust="spacingAndGlyphs" >sus</text>
<text x="816.1" y="592.8" font-size="11.5" fill="#1a1a1a" stroke="#1a1a1a" stroke-width="0.2" textLength="48.07" lengthAdjust="spacingAndGlyphs" >hermanos</text>
<text x="869.9" y="592.8" font-size="11.5" fill="#1a1a1a" stroke="#1a1a1a" stroke-width="0.2" textLength="12.02" lengthAdjust="spacingAndGlyphs" >en</text>
<text x="887.65" y="592.8" font-size="11.5" fill="#1a1a1a" stroke="#1a1a1a" stroke-width="0.2" textLength="8.41" lengthAdjust="spacingAndGlyphs" >la</text>
<text x="901.8" y="592.8" font-size="11.5" fill="#1a1a1a" stroke="#1a1a1a" stroke-width="0.2" textLength="26.44" lengthAdjust="spacingAndGlyphs" >venta</text>
<text x="933.98" y="592.8" font-size="11.5" fill="#1a1a1a" stroke="#1a1a1a" stroke-width="0.2" textLength="12.02" lengthAdjust="spacingAndGlyphs" >de</text>
<text x="445.4" y="606.7" font-size="11.5" fill="#1a1a1a" stroke="#1a1a1a" stroke-width="0.2" textLength="212.6" lengthAdjust="spacingAndGlyphs" >camarón o cangrejo en la misma comunidad</text>
<text x="425" y="637.5" font-size="10.5" fill="#1a1a1a" font-weight="bold" textLength="8.2" lengthAdjust="spacingAndGlyphs" >3.</text>
<text x="445.4" y="635.9" font-size="11.5" fill="#1a1a1a" font-weight="bold" textLength="338.6" lengthAdjust="spacingAndGlyphs" >BREVE DESCRIPCION DE LA SITUACION PERSONAL Y FAMILIAR</text>
<text x="445.4" y="650" font-size="11.5" fill="#1a1a1a" stroke="#1a1a1a" stroke-width="0.2" textLength="12.02" lengthAdjust="spacingAndGlyphs" >La</text>
<text x="461.71" y="650" font-size="11.5" fill="#1a1a1a" stroke="#1a1a1a" stroke-width="0.2" textLength="20.44" lengthAdjust="spacingAndGlyphs" >niña</text>
<text x="486.44" y="650" font-size="11.5" fill="#1a1a1a" stroke="#1a1a1a" stroke-width="0.2" textLength="33.45" lengthAdjust="spacingAndGlyphs" >Wendy</text>
<text x="524.17" y="650" font-size="11.5" fill="#1a1a1a" stroke="#1a1a1a" stroke-width="0.2" textLength="11.42" lengthAdjust="spacingAndGlyphs" >es</text>
<text x="539.88" y="650" font-size="11.5" fill="#1a1a1a" stroke="#1a1a1a" stroke-width="0.2" textLength="8.41" lengthAdjust="spacingAndGlyphs" >la</text>
<text x="552.58" y="650" font-size="11.5" fill="#1a1a1a" stroke="#1a1a1a" stroke-width="0.2" textLength="33.64" lengthAdjust="spacingAndGlyphs" >tercera</text>
<text x="590.51" y="650" font-size="11.5" fill="#1a1a1a" stroke="#1a1a1a" stroke-width="0.2" textLength="12.02" lengthAdjust="spacingAndGlyphs" >de</text>
<text x="606.83" y="650" font-size="11.5" fill="#1a1a1a" stroke="#1a1a1a" stroke-width="0.2" textLength="18.02" lengthAdjust="spacingAndGlyphs" >tres</text>
<text x="629.14" y="650" font-size="11.5" fill="#1a1a1a" stroke="#1a1a1a" stroke-width="0.2" textLength="51.07" lengthAdjust="spacingAndGlyphs" >hermanos,</text>
<text x="684.49" y="650" font-size="11.5" fill="#1a1a1a" stroke="#1a1a1a" stroke-width="0.2" textLength="11.42" lengthAdjust="spacingAndGlyphs" >su</text>
<text x="700.2" y="650" font-size="11.5" fill="#1a1a1a" stroke="#1a1a1a" stroke-width="0.2" textLength="31.24" lengthAdjust="spacingAndGlyphs" >familia</text>
<text x="735.73" y="650" font-size="11.5" fill="#1a1a1a" stroke="#1a1a1a" stroke-width="0.2" textLength="11.42" lengthAdjust="spacingAndGlyphs" >es</text>
<text x="751.43" y="650" font-size="11.5" fill="#1a1a1a" stroke="#1a1a1a" stroke-width="0.2" textLength="63.68" lengthAdjust="spacingAndGlyphs" >restructurada</text>
<text x="819.41" y="650" font-size="11.5" fill="#1a1a1a" stroke="#1a1a1a" stroke-width="0.2" textLength="15.62" lengthAdjust="spacingAndGlyphs" >por</text>
<text x="839.32" y="650" font-size="11.5" fill="#1a1a1a" stroke="#1a1a1a" stroke-width="0.2" textLength="24.64" lengthAdjust="spacingAndGlyphs" >parte</text>
<text x="868.24" y="650" font-size="11.5" fill="#1a1a1a" stroke="#1a1a1a" stroke-width="0.2" textLength="12.02" lengthAdjust="spacingAndGlyphs" >de</text>
<text x="884.56" y="650" font-size="11.5" fill="#1a1a1a" stroke="#1a1a1a" stroke-width="0.2" textLength="11.42" lengthAdjust="spacingAndGlyphs" >su</text>
<text x="900.26" y="650" font-size="11.5" fill="#1a1a1a" stroke="#1a1a1a" stroke-width="0.2" textLength="33.03" lengthAdjust="spacingAndGlyphs" >mama,</text>
<text x="937.59" y="650" font-size="11.5" fill="#1a1a1a" stroke="#1a1a1a" stroke-width="0.2" textLength="8.41" lengthAdjust="spacingAndGlyphs" >la</text>
<text x="445.4" y="666" font-size="11.5" fill="#1a1a1a" stroke="#1a1a1a" stroke-width="0.2" textLength="30.64" lengthAdjust="spacingAndGlyphs" >madre</text>
<text x="479.77" y="666" font-size="11.5" fill="#1a1a1a" stroke="#1a1a1a" stroke-width="0.2" textLength="49.87" lengthAdjust="spacingAndGlyphs" >manifestó,</text>
<text x="533.36" y="666" font-size="11.5" fill="#1a1a1a" stroke="#1a1a1a" stroke-width="0.2" textLength="18.03" lengthAdjust="spacingAndGlyphs" >que</text>
<text x="555.13" y="666" font-size="11.5" fill="#1a1a1a" stroke="#1a1a1a" stroke-width="0.2" textLength="18.03" lengthAdjust="spacingAndGlyphs" >aun</text>
<text x="576.89" y="666" font-size="11.5" fill="#1a1a1a" stroke="#1a1a1a" stroke-width="0.2" textLength="18.03" lengthAdjust="spacingAndGlyphs" >que</text>
<text x="598.65" y="666" font-size="11.5" fill="#1a1a1a" stroke="#1a1a1a" stroke-width="0.2" textLength="12.02" lengthAdjust="spacingAndGlyphs" >no</text>
<text x="614.41" y="666" font-size="11.5" fill="#1a1a1a" stroke="#1a1a1a" stroke-width="0.2" textLength="11.42" lengthAdjust="spacingAndGlyphs" >se</text>
<text x="629.55" y="666" font-size="11.5" fill="#1a1a1a" stroke="#1a1a1a" stroke-width="0.2" textLength="45.07" lengthAdjust="spacingAndGlyphs" >esperaba</text>
<text x="678.35" y="666" font-size="11.5" fill="#1a1a1a" stroke="#1a1a1a" stroke-width="0.2" textLength="20.43" lengthAdjust="spacingAndGlyphs" >este</text>
<text x="702.51" y="666" font-size="11.5" fill="#1a1a1a" stroke="#1a1a1a" stroke-width="0.2" textLength="51.07" lengthAdjust="spacingAndGlyphs" >embarazo,</text>
<text x="757.31" y="666" font-size="11.5" fill="#1a1a1a" stroke="#1a1a1a" stroke-width="0.2" textLength="43.26" lengthAdjust="spacingAndGlyphs" >cumplido</text>
<text x="804.3" y="666" font-size="11.5" fill="#1a1a1a" stroke="#1a1a1a" stroke-width="0.2" textLength="17.43" lengthAdjust="spacingAndGlyphs" >con</text>
<text x="825.46" y="666" font-size="11.5" fill="#1a1a1a" stroke="#1a1a1a" stroke-width="0.2" textLength="16.82" lengthAdjust="spacingAndGlyphs" >sus</text>
<text x="846.01" y="666" font-size="11.5" fill="#1a1a1a" stroke="#1a1a1a" stroke-width="0.2" textLength="46.88" lengthAdjust="spacingAndGlyphs" >chequeos</text>
<text x="896.62" y="666" font-size="11.5" fill="#1a1a1a" stroke="#1a1a1a" stroke-width="0.2" textLength="40.25" lengthAdjust="spacingAndGlyphs" >médicos</text>
<text x="940.59" y="666" font-size="11.5" fill="#1a1a1a" stroke="#1a1a1a" stroke-width="0.2" textLength="5.4" lengthAdjust="spacingAndGlyphs" >y</text>
<text x="445.4" y="683" font-size="11.5" fill="#1a1a1a" stroke="#1a1a1a" stroke-width="0.2" textLength="13.82" lengthAdjust="spacingAndGlyphs" >las</text>
<text x="462.19" y="683" font-size="11.5" fill="#1a1a1a" stroke="#1a1a1a" stroke-width="0.2" textLength="40.26" lengthAdjust="spacingAndGlyphs" >vacunas</text>
<text x="505.41" y="683" font-size="11.5" fill="#1a1a1a" stroke="#1a1a1a" stroke-width="0.2" textLength="55.28" lengthAdjust="spacingAndGlyphs" >necesarias,</text>
<text x="563.66" y="683" font-size="11.5" fill="#1a1a1a" stroke="#1a1a1a" stroke-width="0.2" textLength="8.41" lengthAdjust="spacingAndGlyphs" >el</text>
<text x="575.04" y="683" font-size="11.5" fill="#1a1a1a" stroke="#1a1a1a" stroke-width="0.2" textLength="47.46" lengthAdjust="spacingAndGlyphs" >desarrollo</text>
<text x="625.47" y="683" font-size="11.5" fill="#1a1a1a" stroke="#1a1a1a" stroke-width="0.2" textLength="54.69" lengthAdjust="spacingAndGlyphs" >gestacional</text>
<text x="683.12" y="683" font-size="11.5" fill="#1a1a1a" stroke="#1a1a1a" stroke-width="0.2" textLength="11.42" lengthAdjust="spacingAndGlyphs" >se</text>
<text x="697.51" y="683" font-size="11.5" fill="#1a1a1a" stroke="#1a1a1a" stroke-width="0.2" textLength="14.42" lengthAdjust="spacingAndGlyphs" >dio</text>
<text x="714.9" y="683" font-size="11.5" fill="#1a1a1a" stroke="#1a1a1a" stroke-width="0.2" textLength="13.82" lengthAdjust="spacingAndGlyphs" >sin</text>
<text x="731.68" y="683" font-size="11.5" fill="#1a1a1a" stroke="#1a1a1a" stroke-width="0.2" textLength="44.48" lengthAdjust="spacingAndGlyphs" >novedad,</text>
<text x="779.13" y="683" font-size="11.5" fill="#1a1a1a" stroke="#1a1a1a" stroke-width="0.2" textLength="8.41" lengthAdjust="spacingAndGlyphs" >el</text>
<text x="790.51" y="683" font-size="11.5" fill="#1a1a1a" stroke="#1a1a1a" stroke-width="0.2" textLength="24.64" lengthAdjust="spacingAndGlyphs" >parto</text>
<text x="818.11" y="683" font-size="11.5" fill="#1a1a1a" stroke="#1a1a1a" stroke-width="0.2" textLength="15.03" lengthAdjust="spacingAndGlyphs" >fue</text>
<text x="836.11" y="683" font-size="11.5" fill="#1a1a1a" stroke="#1a1a1a" stroke-width="0.2" textLength="44.47" lengthAdjust="spacingAndGlyphs" >mediante</text>
<text x="883.54" y="683" font-size="11.5" fill="#1a1a1a" stroke="#1a1a1a" stroke-width="0.2" textLength="18.03" lengthAdjust="spacingAndGlyphs" >una</text>
<text x="904.54" y="683" font-size="11.5" fill="#1a1a1a" stroke="#1a1a1a" stroke-width="0.2" textLength="41.46" lengthAdjust="spacingAndGlyphs" >cesárea,</text>
<text x="445.4" y="699" font-size="11.5" fill="#1a1a1a" stroke="#1a1a1a" stroke-width="0.2" textLength="12.02" lengthAdjust="spacingAndGlyphs" >en</text>
<text x="461.82" y="699" font-size="11.5" fill="#1a1a1a" stroke="#1a1a1a" stroke-width="0.2" textLength="8.41" lengthAdjust="spacingAndGlyphs" >el</text>
<text x="474.63" y="699" font-size="11.5" fill="#1a1a1a" stroke="#1a1a1a" stroke-width="0.2" textLength="45.06" lengthAdjust="spacingAndGlyphs" >momento</text>
<text x="524.09" y="699" font-size="11.5" fill="#1a1a1a" stroke="#1a1a1a" stroke-width="0.2" textLength="14.42" lengthAdjust="spacingAndGlyphs" >del</text>
<text x="542.91" y="699" font-size="11.5" fill="#1a1a1a" stroke="#1a1a1a" stroke-width="0.2" textLength="52.27" lengthAdjust="spacingAndGlyphs" >nacimiento</text>
<text x="599.58" y="699" font-size="11.5" fill="#1a1a1a" stroke="#1a1a1a" stroke-width="0.2" textLength="8.41" lengthAdjust="spacingAndGlyphs" >la</text>
<text x="612.39" y="699" font-size="11.5" fill="#1a1a1a" stroke="#1a1a1a" stroke-width="0.2" textLength="20.44" lengthAdjust="spacingAndGlyphs" >niña</text>
<text x="637.22" y="699" font-size="11.5" fill="#1a1a1a" stroke="#1a1a1a" stroke-width="0.2" textLength="29.44" lengthAdjust="spacingAndGlyphs" >recibe</text>
<text x="671.06" y="699" font-size="11.5" fill="#1a1a1a" stroke="#1a1a1a" stroke-width="0.2" textLength="41.47" lengthAdjust="spacingAndGlyphs" >oxígeno,</text>
<text x="716.92" y="699" font-size="11.5" fill="#1a1a1a" stroke="#1a1a1a" stroke-width="0.2" textLength="13.82" lengthAdjust="spacingAndGlyphs" >sin</text>
<text x="735.14" y="699" font-size="11.5" fill="#1a1a1a" stroke="#1a1a1a" stroke-width="0.2" textLength="45.66" lengthAdjust="spacingAndGlyphs" >embargo,</text>
<text x="785.2" y="699" font-size="11.5" fill="#1a1a1a" stroke="#1a1a1a" stroke-width="0.2" textLength="20.43" lengthAdjust="spacingAndGlyphs" >esto</text>
<text x="810.03" y="699" font-size="11.5" fill="#1a1a1a" stroke="#1a1a1a" stroke-width="0.2" textLength="12.02" lengthAdjust="spacingAndGlyphs" >ha</text>
<text x="826.45" y="699" font-size="11.5" fill="#1a1a1a" stroke="#1a1a1a" stroke-width="0.2" textLength="41.47" lengthAdjust="spacingAndGlyphs" >afectado</text>
<text x="872.31" y="699" font-size="11.5" fill="#1a1a1a" stroke="#1a1a1a" stroke-width="0.2" textLength="6.01" lengthAdjust="spacingAndGlyphs" >a</text>
<text x="882.72" y="699" font-size="11.5" fill="#1a1a1a" stroke="#1a1a1a" stroke-width="0.2" textLength="11.42" lengthAdjust="spacingAndGlyphs" >su</text>
<text x="898.54" y="699" font-size="11.5" fill="#1a1a1a" stroke="#1a1a1a" stroke-width="0.2" textLength="47.46" lengthAdjust="spacingAndGlyphs" >desarrollo</text>
<text x="445.4" y="715" font-size="11.5" fill="#1a1a1a" stroke="#1a1a1a" stroke-width="0.2" textLength="187.8" lengthAdjust="spacingAndGlyphs" >post natal, se dio con total normalidad.</text>
<rect x="0" y="716" width="1366" height="1" fill="#d4d4d4" />
<rect x="0" y="717" width="1366" height="21" fill="#f3f3f3" />
<text x="7.5" y="732" font-size="12" fill="#444" stroke="#444" stroke-width="0.15" textLength="68.5" lengthAdjust="spacingAndGlyphs" >Página 1 de 4</text>
<text x="96.6" y="732" font-size="12" fill="#444" stroke="#444" stroke-width="0.15" textLength="69.4" lengthAdjust="spacingAndGlyphs" >1186 palabras</text>
<path d="M186.5 721.5 V731.5 L193 733 L199.5 731.5 V721.5 M193 722.5 V733 M186.5 721.5 L193 722.5" fill="none" stroke="#666" stroke-width="1"/>
<path d="M195 723 L199.5 727.5 M199.5 723 L195 727.5" stroke="#666" stroke-width="1"/>
<text x="218.5" y="732" font-size="12" fill="#444" stroke="#444" stroke-width="0.15" textLength="85.5" lengthAdjust="spacingAndGlyphs" >Español (España)</text>
<circle cx="326.9" cy="723" r="2.9" fill="#606060"/><rect x="331.2" y="721.1" width="5.7" height="2.5" fill="#606060"/>
<path d="M336.4 723 V732.4 H325.6 V727.1" fill="none" stroke="#606060" stroke-width="1"/>
<g fill="#606060"><rect x="330.3" y="725.9" width="1.8" height="1.1"/><rect x="333.3" y="725.9" width="1.8" height="1.1"/><rect x="327.3" y="727.9" width="1.8" height="1.1"/><rect x="330.3" y="727.9" width="1.8" height="1.1"/><rect x="333.3" y="727.9" width="1.8" height="1.1"/><rect x="327.3" y="729.9" width="1.8" height="1.1"/><rect x="330.3" y="729.9" width="1.8" height="1.1"/><rect x="333.3" y="729.9" width="1.8" height="1.1"/></g>
<path d="M359.6 721.2 A6 6 0 1 0 365 732" fill="none" stroke="#444" stroke-width="1.2" stroke-dasharray="2.6 1.6"/>
<path d="M361.5 720 V725.5" stroke="#444" stroke-width="1.1"/><path d="M359.3 725.2 H363.7 L361.5 727.6 Z" fill="#444"/>
<text x="363.8" y="734.7" font-size="13.5" fill="#333" font-weight="bold" textLength="7" lengthAdjust="spacingAndGlyphs" >?</text>
<text x="373" y="732" font-size="12" fill="#444" stroke="#444" stroke-width="0.15" textLength="145.3" lengthAdjust="spacingAndGlyphs" >Accesibilidad: No disponible</text>
<rect x="1106" y="717" width="40" height="21" fill="#c6c6c6" />
<g fill="none" stroke="#666" stroke-width="1">
<path d="M1085.5 721 V732 M1079.5 730.5 V720.5 H1092.5 V730.5 H1086.5 L1085.5 732.5 L1084.5 730.5 Z"/>
<path d="M1081 722.5 H1084 M1081 724.5 H1084 M1081 726.5 H1084 M1081 728.5 H1084 M1087 722.5 H1090 M1087 724.5 H1090 M1087 726.5 H1090 M1087 728.5 H1090"/>
<rect x="1119.5" y="720.5" width="13" height="12"/><path d="M1121 722.5 H1131 M1121 724.5 H1131 M1121 726.5 H1131 M1121 728.5 H1131 M1121 730.5 H1131"/>
<path d="M1168.5 724 V720.5 H1159.5 V730.5 H1165"/><path d="M1161 722.5 H1167 M1161 724.5 H1166 M1161 726.5 H1165 M1161 728.5 H1164"/>
</g>
<circle cx="1169" cy="728.7" r="3.9" fill="#666" stroke="#f3f3f3" stroke-width="0.8"/><path d="M1167 726.5 Q1169 728 1168 730.5 M1170 726 Q1171.5 727.5 1171.5 729" fill="none" stroke="#ddd" stroke-width="0.7"/>
<rect x="1192.5" y="727" width="7" height="1" fill="#555" />
<rect x="1205" y="727" width="100" height="1" fill="#555" />
<rect x="1255" y="724" width="1" height="7" fill="#555" />
<rect x="1246" y="722" width="5" height="11" fill="#555" />
<rect x="1309.5" y="727" width="8" height="1" fill="#555" />
<rect x="1313" y="723.5" width="1" height="8" fill="#555" />
<text x="1331" y="732" font-size="12" fill="#444" stroke="#444" stroke-width="0.15" textLength="20.7" lengthAdjust="spacingAndGlyphs" >86%</text>
<rect x="0" y="738" width="1366" height="30" fill="#1a2a2f" />
<path d="M10 747.5 L16.8 746.6 V752.6 H10 Z M17.8 746.4 L26 745.2 V752.6 H17.8 Z M10 753.6 H16.8 V759.6 L10 758.7 Z M17.8 753.6 H26 V761 L17.8 759.8 Z" fill="#fff"/>
<circle cx="56.7" cy="750.3" r="4.6" fill="none" stroke="#fff" stroke-width="1.4"/><path d="M53.5 753.6 L46.5 760.6" stroke="#fff" stroke-width="1.5"/>
<circle cx="89.8" cy="753" r="6.7" fill="none" stroke="#fff" stroke-width="1.7"/>
<g fill="none" stroke="#fff" stroke-width="1.2"><rect x="118.5" y="748.5" width="10" height="9"/><path d="M118 745.5 H128.5 M118 760.5 H128.5 M131.5 745 V761"/></g><rect x="130.5" y="748" width="3" height="3" fill="#fff"/>
<defs><linearGradient id="edg" x1="1" y1="0" x2="0" y2="1"><stop offset="0" stop-color="#5fd35a"/><stop offset="0.35" stop-color="#29a9e8"/><stop offset="1" stop-color="#1264c2"/></linearGradient></defs>
<circle cx="165" cy="752.5" r="8.5" fill="url(#edg)"/>
<path d="M157.5 755 C 158.5 760, 165 762, 170 759.5 C 166 760, 161 758, 161 754.5 C 161 751, 165 750, 167.5 751.5 C 170 753, 169.5 755.5, 167 756.5 L173.5 756.5 C 174 752, 171 748.5, 166 748.5 C 161 748.5, 157.5 751, 157.5 755 Z" fill="#0b4fa0"/>
<path d="M167.5 755.8 C 170 755, 170 752.5, 167.5 751.5 C 171 751, 173 753, 173.5 756.5 Z" fill="#1a2a2f" opacity="0.9"/>
<path d="M193.6 746 H200 L202 748 H210.3 V760 H193.6 Z" fill="#e8a400"/><rect x="193.6" y="749.5" width="16.7" height="10.5" fill="#ffd24a"/><rect x="199.5" y="755" width="5" height="5" fill="#1a73c8"/>
<rect x="188" y="766" width="28" height="2" fill="#76b9ed" />
<path d="M230.5 749 H246 V760 Q246 761 245 761 H231.5 Q230.5 761 230.5 760 Z" fill="#f3f3f3"/><path d="M235 749 V747 Q238 744 241.5 747 V749" fill="none" stroke="#3aa0e8" stroke-width="1.3"/>
<rect x="234.5" y="751.5" width="3.3" height="3.3" fill="#f25022"/><rect x="238.7" y="751.5" width="3.3" height="3.3" fill="#7fba00"/><rect x="234.5" y="755.7" width="3.3" height="3.3" fill="#00a4ef"/><rect x="238.7" y="755.7" width="3.3" height="3.3" fill="#ffb900"/>
<path d="M267.6 750 L276 744.5 L284.5 750 Z" fill="#0f5cb8"/>
<rect x="267.6" y="750" width="16.9" height="10" fill="#28a8ea"/>
<path d="M267.6 750 L276 755.5 L284.5 750 V752.5 L276 758 L267.6 752.5 Z" fill="#f2f2f2"/>
<path d="M267.6 752.5 L276 758 L284.5 752.5 V760 H267.6 Z" fill="#1b9de2"/><path d="M267.6 760 L276 755 L284.5 760 Z" fill="#50c8f5"/>
<rect x="310" y="745" width="11" height="16" rx="1" fill="#21a366"/><rect x="310" y="745" width="11" height="5.5" fill="#33c481"/><rect x="310" y="755.5" width="11" height="5.5" fill="#185c37"/><rect x="305" y="748" width="9.5" height="10" rx="1" fill="#107c41"/>
<text x="306.8" y="756.5" font-size="8.5" fill="#fff" font-weight="bold" textLength="6" lengthAdjust="spacingAndGlyphs" >X</text>
<rect x="332" y="738" width="36" height="30" fill="#3e4d53" />
<rect x="332" y="766" width="36" height="2" fill="#76b9ed" />
<rect x="346" y="745" width="12" height="16" rx="1" fill="#2b7cd3"/><rect x="346" y="745" width="12" height="4" fill="#41a5ee"/><rect x="346" y="757" width="12" height="4" fill="#103f91"/><rect x="341.5" y="748" width="10" height="10" rx="1" fill="#185abd"/>
<text x="342.3" y="756.5" font-size="8.5" fill="#fff" font-weight="bold" textLength="8.5" lengthAdjust="spacingAndGlyphs" >W</text>
<circle cx="387.5" cy="753" r="8.3" fill="#ed6c47"/><path d="M387.5 744.7 A8.3 8.3 0 0 1 395.8 753 H387.5 Z" fill="#ff8f6b"/><rect x="378.7" y="748" width="9.5" height="10" rx="1" fill="#c43e1c"/>
<text x="380.6" y="756.5" font-size="8.5" fill="#fff" font-weight="bold" textLength="6" lengthAdjust="spacingAndGlyphs" >P</text>
<rect x="416" y="744.5" width="16.5" height="17" fill="#0a1a8c"/><path d="M418 748 V746 H421 M427 746 H430.5 V748 M418 757.5 V760 H421 M427 760 H430.5 V757.5 M417 753 H431.5 M420 750 L424.2 754 L428.5 750" fill="none" stroke="#3be8f5" stroke-width="1.3"/>
<circle cx="461" cy="753" r="8.3" fill="#4a8cff"/><rect x="455.5" y="749.8" width="8" height="6.5" rx="1.3" fill="#fff"/><path d="M464 752 L467 750 V756 L464 754 Z" fill="#fff"/>
<circle cx="498" cy="753" r="8.3" fill="#db4437"/><path d="M498 753 L505.2 748.9 A8.3 8.3 0 0 1 498.4 761.3 Z" fill="#ffcd40"/><path d="M498 753 L498.4 761.3 A8.3 8.3 0 0 1 490.8 748.9 Z" fill="#0f9d58"/><circle cx="498" cy="753" r="3.9" fill="#fff"/><circle cx="498" cy="753" r="3" fill="#4285f4"/>
<rect x="484" y="766" width="28" height="2" fill="#76b9ed" />
<circle cx="535" cy="753" r="8.3" fill="#1ed760"/><path d="M530 750.5 Q535 748.8 540.5 751 M530.8 753.4 Q535 752 539.6 754 M531.5 756 Q535 755 538.8 756.6" fill="none" stroke="#000" stroke-width="1.3" stroke-linecap="round"/>
<rect x="521" y="766" width="28" height="2" fill="#76b9ed" />
<circle cx="914" cy="750" r="7.2" fill="#f4a522"/><circle cx="918.5" cy="746" r="6.3" fill="#1a2a2f"/>
<defs><linearGradient id="cld" x1="0" y1="0" x2="0" y2="1"><stop offset="0" stop-color="#e6f0fb"/><stop offset="1" stop-color="#9cc0ea"/></linearGradient></defs>
<path d="M909 763 H925 A3.8 3.8 0 0 0 925.5 755.5 A6 6 0 0 0 914 753.5 A4.6 4.6 0 0 0 909 763 Z" fill="url(#cld)"/>
<circle cx="925.2" cy="743.7" r="2.6" fill="#d9342b"/>
<text x="936" y="758" font-size="14.5" fill="#fff" stroke="#fff" stroke-width="0.15" textLength="29" lengthAdjust="spacingAndGlyphs" >20°C</text>
<text x="974.5" y="758" font-size="14.5" fill="#fff" stroke="#fff" stroke-width="0.15" textLength="83" lengthAdjust="spacingAndGlyphs" >Parc. nublado</text>
<path d="M1076 756.5 L1082 750 L1088 756.5" fill="none" stroke="#fff" stroke-width="1.3"/>
<rect x="1100" y="744" width="12" height="17" rx="6" fill="#1c7ef0"/><path d="M1103 749 L1109 756 L1106 758.5 V746.5 L1109 749 L1103 756" fill="none" stroke="#fff" stroke-width="1"/>
<path d="M1123 757 H1137 A3 3 0 0 0 1136 751 A5 5 0 0 0 1127 749.5 A3.8 3.8 0 0 0 1123 757 Z" fill="#cfcfcf"/>
<g fill="none" stroke="#fff" stroke-width="1.2"><rect x="1149.5" y="748.5" width="8" height="8" rx="1.5"/><path d="M1157.5 751 L1160.5 749.5 V755.5 L1157.5 754 M1150 745.5 Q1154 744 1158 745.5 M1150 759.5 Q1154 761 1158 759.5"/></g>
<g fill="none" stroke="#fff" stroke-width="1.2"><path d="M1174 760 A11 11 0 0 1 1185 749 M1177 760 A8 8 0 0 1 1185 752 M1180 760 A5 5 0 0 1 1185 755"/></g><circle cx="1184" cy="759" r="1.2" fill="#fff"/>
<rect x="1194.5" y="749.5" width="14" height="8" fill="none" stroke="#fff" stroke-width="1.2"/><rect x="1196" y="751" width="5" height="5" fill="#fff"/><circle cx="1206" cy="757" r="4" fill="#18a34a"/><path d="M1206 754.5 L1204.3 757.5 H1207.7 Z M1206 757.5 V759.5" fill="#fff" stroke="#fff" stroke-width="0.6"/>
<path d="M1218.5 750.5 H1221 L1225 747 V759 L1221 755.5 H1218.5 Z" fill="none" stroke="#fff" stroke-width="1.1"/><path d="M1227 750 Q1229 753 1227 756 M1229.5 748 Q1232.5 753 1229.5 758 M1232 746 Q1236 753 1232 760" fill="none" stroke="#fff" stroke-width="1.1"/>
<text x="1246" y="758" font-size="12" fill="#fff" stroke="#fff" stroke-width="0.15" textLength="18" lengthAdjust="spacingAndGlyphs" >ESP</text>
<text x="1280" y="758" font-size="12" fill="#fff" stroke="#fff" stroke-width="0.15" textLength="27" lengthAdjust="spacingAndGlyphs" >16:17</text>
<path d="M1325.5 745.5 H1341.5 V757 H1336 L1333.5 760 L1331 757 H1325.5 Z" fill="#fff"/><path d="M1328 748.5 H1339 M1328 751 H1339 M1328 753.5 H1336" stroke="#1b2a30" stroke-width="1"/>
<rect x="1361" y="738" width="1" height="30" fill="#8a959a" />
</svg>
</body></html>
